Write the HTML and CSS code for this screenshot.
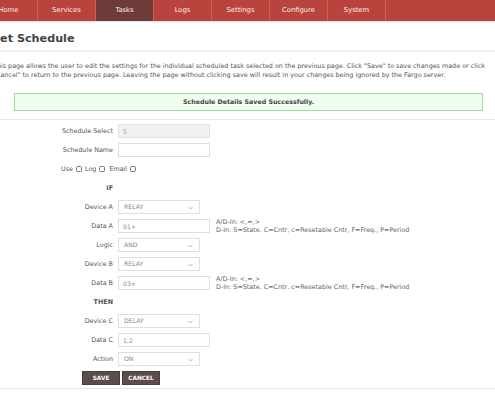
FILE: index.html
```html
<!DOCTYPE html>
<html>
<head>
<meta charset="utf-8">
<title>Set Schedule</title>
<link rel="stylesheet" href="styles.css">
</head>
<body>
<nav class="topnav">
  <ul>
    <li>Home</li>
    <li>Services</li>
    <li class="active">Tasks</li>
    <li>Logs</li>
    <li>Settings</li>
    <li>Configure</li>
    <li>System</li>
  </ul>
</nav>
<main class="page">
  <h1 class="title">Set Schedule</h1>
  <p class="intro">This page allows the user to edit the settings for the individual scheduled task selected on the previous page. Click "Save" to save changes made or click<br>"Cancel" to return to the previous page. Leaving the page without clicking save will result in your changes being ignored by the Fargo server.</p>
  <div class="alert">Schedule Details Saved Successfully.</div>
  <form class="sched">
    <label class="lbl">Schedule Select</label>
    <div class="fld"><input class="txt" type="text" value="5" disabled></div>

    <label class="lbl">Schedule Name</label>
    <div class="fld"><input class="txt" type="text" value=""></div>

    <div class="checks">
      <span>Use</span><span class="cb"></span>
      <span>Log</span><span class="cb"></span>
      <span class="email">Email</span><span class="cb"></span>
    </div>

    <div class="lbl sect">IF</div>
    <div class="fld"></div>

    <label class="lbl">Device A</label>
    <div class="fld"><div class="sel">RELAY<svg class="chev" viewBox="0 0 6 4" width="5" height="4"><path d="M0.5 0.7 L3 3.2 L5.5 0.7" fill="none" stroke="#999" stroke-width="0.9"/></svg></div></div>

    <label class="lbl">Data A</label>
    <div class="fld"><input class="txt" type="text" value="01+"><div class="help">A/D-In: &lt;,=,&gt;<br>D-In: S=State. C=Cntr, c=Resetable Cntr, F=Freq., P=Period</div></div>

    <label class="lbl">Logic</label>
    <div class="fld"><div class="sel">AND<svg class="chev" viewBox="0 0 6 4" width="5" height="4"><path d="M0.5 0.7 L3 3.2 L5.5 0.7" fill="none" stroke="#999" stroke-width="0.9"/></svg></div></div>

    <label class="lbl">Device B</label>
    <div class="fld"><div class="sel">RELAY<svg class="chev" viewBox="0 0 6 4" width="5" height="4"><path d="M0.5 0.7 L3 3.2 L5.5 0.7" fill="none" stroke="#999" stroke-width="0.9"/></svg></div></div>

    <label class="lbl">Data B</label>
    <div class="fld"><input class="txt" type="text" value="03+"><div class="help">A/D-In: &lt;,=,&gt;<br>D-In: S=State. C=Cntr, c=Resetable Cntr, F=Freq., P=Period</div></div>

    <div class="lbl sect">THEN</div>
    <div class="fld"></div>

    <label class="lbl">Device C</label>
    <div class="fld"><div class="sel">DELAY<svg class="chev" viewBox="0 0 6 4" width="5" height="4"><path d="M0.5 0.7 L3 3.2 L5.5 0.7" fill="none" stroke="#999" stroke-width="0.9"/></svg></div></div>

    <label class="lbl">Data C</label>
    <div class="fld"><input class="txt" type="text" value="1,2"></div>

    <label class="lbl">Action</label>
    <div class="fld"><div class="sel">ON<svg class="chev" viewBox="0 0 6 4" width="5" height="4"><path d="M0.5 0.7 L3 3.2 L5.5 0.7" fill="none" stroke="#999" stroke-width="0.9"/></svg></div></div>

    <div class="buttons">
      <button type="button" class="btn">SAVE</button>
      <button type="button" class="btn">CANCEL</button>
    </div>
  </form>
</main>
</body>
</html>
```
FILE: styles.css
```css
html, body {
  margin: 0;
  padding: 0;
  background: #fff;
}
body {
  font-family: "DejaVu Sans", Tahoma, sans-serif;
  font-size: 6.4px;
  color: #555;
  overflow: hidden;
}

/* top navigation */
.topnav {
  background: #b9443e;
  height: 21px;
  border-bottom: 1px solid #e4e4e4;
}
.topnav ul {
  display: flex;
  list-style: none;
  margin: 0 0 0 -20px;
  padding: 0;
}
.topnav li {
  width: 57px;
  border-right: 1px solid #c7625c;
  line-height: 21px;
  height: 21px;
  text-align: center;
  color: #fbeeee;
  font-family: "DejaVu Sans", sans-serif;
  font-size: 6.8px;
}
.topnav li.active {
  background: #6f3b38;
}

/* heading */
.title {
  margin: 0 0 0 -8px;
  padding: 9px 0 3px 0;
  line-height: 16px;
  font-family: "DejaVu Sans", sans-serif;
  font-size: 11.2px;
  font-weight: bold;
  color: #444;
  border-bottom: 2px solid #f0f0f0;
}

.intro {
  margin: 10px 0 13px -7px;
  line-height: 9px;
  color: #555;
  white-space: nowrap;
}

.alert {
  margin: 0 12px 0 14px;
  height: 16px;
  line-height: 16px;
  border: 1px solid #9cdc9c;
  background: #efffef;
  text-align: center;
  font-weight: bold;
  color: #444;
  font-size: 6.3px;
}

/* form */
.sched {
  margin-top: 8px;
  border-top: 1px solid #e6e6e6;
  border-bottom: 1px solid #e6e6e6;
  padding: 4px 0 3px 0;
  display: grid;
  grid-template-columns: 113px 1fr;
  column-gap: 5px;
  row-gap: 5px;
  align-items: center;
}
.lbl {
  text-align: right;
  color: #555;
  line-height: 14px;
}
.lbl.sect {
  font-weight: bold;
  line-height: 13px;
  color: #555;
}
.fld {
  display: flex;
  align-items: center;
  height: 14px;
}
.txt {
  box-sizing: border-box;
  width: 92px;
  height: 14px;
  border: 1px solid #dedede;
  padding: 0 0 0 4px;
  margin: 0;
  font-family: "DejaVu Sans", sans-serif;
  font-size: 6.2px;
  color: #888;
  background: #fff;
  outline: none;
}
.txt:disabled {
  background: #f1f1f1;
  border-color: #e2e2e2;
  color: #999;
}
.sel {
  position: relative;
  box-sizing: border-box;
  width: 82px;
  height: 14px;
  border: 1px solid #dedede;
  padding-left: 5px;
  line-height: 12px;
  color: #888;
  font-size: 6.2px;
  background: #fff;
}
.chev {
  position: absolute;
  right: 6px;
  top: 5px;
}
.help {
  margin: -1px 0 -1px 6px;
  line-height: 8px;
  color: #666;
  white-space: nowrap;
}

.checks {
  grid-column: 1 / -1;
  display: flex;
  align-items: center;
  height: 14px;
  padding-left: 61px;
  color: #555;
}
.checks .cb {
  box-sizing: border-box;
  width: 6px;
  height: 6px;
  border: 1px solid #777;
  border-radius: 1.5px;
  margin: 0 3px 0 3px;
}
.checks .email {
  margin-left: 1px;
}

.buttons {
  grid-column: 1 / -1;
  display: flex;
  gap: 2px;
  padding-left: 82px;
  height: 14px;
}
.btn {
  box-sizing: border-box;
  width: 38px;
  height: 14px;
  margin: 0;
  padding: 0;
  border: 1px solid #4a3d3b;
  background: #5c4d4b;
  color: #fff;
  font-family: "DejaVu Sans", sans-serif;
  font-size: 5.8px;
  font-weight: bold;
}
```
